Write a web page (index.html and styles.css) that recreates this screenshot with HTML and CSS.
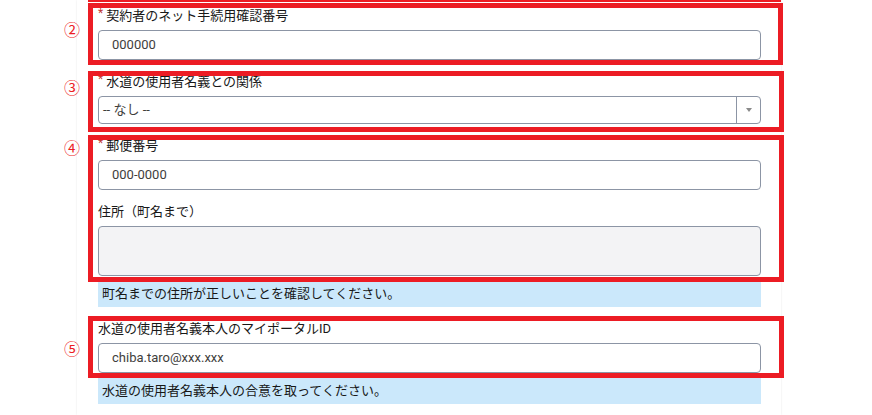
FILE: index.html
```html
<!DOCTYPE html>
<html lang="ja">
<head>
<meta charset="utf-8">
<link rel="stylesheet" href="styles.css">
</head>
<body>
<div class="card">
  <div class="annot-prev"></div>

  <div class="annotated">
    <div class="field">
      <div class="label"><span class="req">*</span>契約者のネット手続用確認番号</div>
      <div class="input">000000</div>
    </div>
    <div class="annot annot--2"></div>
    <span class="num num--2">②</span>
  </div>

  <div class="annotated">
    <div class="field">
      <div class="label"><span class="req">*</span>水道の使用者名義との関係</div>
      <div class="select">
        <span class="select-value">-- なし --</span>
        <span class="select-btn"><span class="caret"></span></span>
      </div>
    </div>
    <div class="annot annot--3"></div>
    <span class="num num--3">③</span>
  </div>

  <div class="group">
    <div class="annotated annotated--stack">
      <div class="field">
        <div class="label"><span class="req">*</span>郵便番号</div>
        <div class="input">000-0000</div>
      </div>
      <div class="field">
        <div class="label">住所（町名まで）</div>
        <div class="textarea"></div>
      </div>
      <div class="annot annot--4"></div>
      <span class="num num--4">④</span>
    </div>
    <div class="info">町名までの住所が正しいことを確認してください。</div>
  </div>

  <div class="group">
    <div class="annotated">
      <div class="field">
        <div class="label">水道の使用者名義本人のマイポータルID</div>
        <div class="input">chiba.taro@xxx.xxx</div>
      </div>
      <div class="annot annot--5"></div>
      <span class="num num--5">⑤</span>
    </div>
    <div class="info">水道の使用者名義本人の合意を取ってください。</div>
  </div>
</div>
</body>
</html>
```

FILE: styles.css
```css
* { box-sizing: border-box; }

html, body {
  margin: 0;
  padding: 0;
  background: #ffffff;
}

body {
  font-family: Roboto, "Noto Sans CJK JP", sans-serif;
  color: #181818;
  font-size: 13px;
  height: 415px;
  overflow: hidden;
}

.card {
  position: relative;
  margin-left: 77px;
  width: 704px;
  min-height: 415px;
  padding: 7px 20px 0 21px;
  background: #ffffff;
  box-shadow: 0 0 2px rgba(0, 0, 0, 0.10);
  display: flex;
  flex-direction: column;
  gap: 13px;
}

.annot-prev {
  position: absolute;
  top: 0;
  left: 11px;
  width: 693px;
  height: 2px;
  background: #ec1c24;
}

.annotated {
  position: relative;
}

.annotated--stack {
  display: flex;
  flex-direction: column;
  gap: 13px;
}

.group {
  display: flex;
  flex-direction: column;
  gap: 4px;
}

.field {
  display: flex;
  flex-direction: column;
  gap: 5px;
}

.label {
  font-size: 13px;
  line-height: 18px;
  color: #181818;
  white-space: nowrap;
}

.req {
  display: inline-block;
  color: #c23934;
  font-size: 12px;
  line-height: 10px;
  vertical-align: top;
  margin-right: 3px;
  margin-top: 1px;
}

.input {
  height: 30px;
  border: 1px solid #8c95a5;
  border-radius: 4px;
  background: #ffffff;
  padding-left: 13px;
  font-size: 13px;
  line-height: 28px;
  color: #3e3e3c;
}

.select {
  height: 28px;
  border: 1px solid #8c95a5;
  border-radius: 4px;
  background: #ffffff;
  display: flex;
}

.select-value {
  flex: 1;
  padding-left: 4px;
  font-size: 13px;
  line-height: 26px;
  color: #3e3e3c;
}

.select-btn {
  width: 24px;
  border-left: 1px solid #8c95a5;
  display: flex;
  align-items: center;
  justify-content: center;
}

.caret {
  width: 0;
  height: 0;
  border-left: 3px solid transparent;
  border-right: 3px solid transparent;
  border-top: 4px solid #8a8a8a;
}

.textarea {
  height: 50px;
  border: 1px solid #8c95a5;
  border-radius: 4px;
  background: #f3f3f5;
}

.info {
  background: #cbe8fb;
  padding: 5px 4px;
  font-size: 13px;
  line-height: 17px;
  color: #181818;
}

.annot {
  position: absolute;
  border: 5px solid #ec1c24;
  pointer-events: none;
}

.annot--2 { top: -4px; bottom: -5px; left: -10px; right: -22px; }
.annot--3 { top: -2px; bottom: -8px; left: -10px; right: -23px; }
.annot--4 { top: -2px; bottom: -6px; left: -10px; right: -23px; }
.annot--5 { top: -4px; bottom: -5px; left: -10px; right: -23px; }

.num {
  position: absolute;
  left: -34px;
  font-family: "Noto Sans CJK JP", sans-serif;
  font-size: 16px;
  line-height: 16px;
  color: #ec1c24;
}

.num--2 { top: 14px; }
.num--3 { top: 6px; }
.num--4 { top: 2px; }
.num--5 { top: 20px; }
```
